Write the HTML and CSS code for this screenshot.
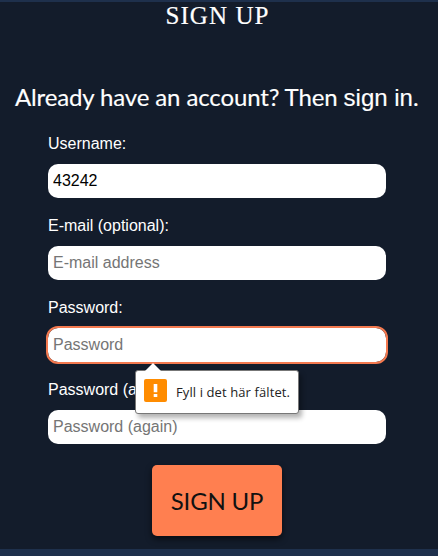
FILE: index.html
```html
<!DOCTYPE html>
<html lang="en">
<head>
<meta charset="utf-8">
<title>Sign up</title>
<link rel="stylesheet" href="styles.css">
</head>
<body>
<main class="panel">
  <h1 class="title">SIGN UP</h1>
  <p class="lead">Already have an account? Then <a class="link">sign in</a>.</p>
  <form class="form" novalidate>
    <div class="field">
      <label for="username">Username:</label>
      <input id="username" type="text" value="43242">
    </div>
    <div class="field">
      <label for="email">E-mail (optional):</label>
      <input id="email" type="email" placeholder="E-mail address">
    </div>
    <div class="field">
      <label for="password">Password:</label>
      <input id="password" class="active" type="password" placeholder="Password">
      <div class="tip">
        <svg class="arrow" width="18" height="9" viewBox="0 0 18 9"><path d="M0 9 9 0l9 9z" fill="#fff"/></svg>
        <svg class="warn" width="23" height="23" viewBox="0 0 23 23"><rect width="23" height="23" rx="2" fill="#ff8c00"/><path d="M9.7 5h3.6v8.3H9.7zM9.7 15h3.6v3H9.7z" fill="#fff"/></svg>
        <span class="tip-text">Fyll i det här fältet.</span>
      </div>
    </div>
    <div class="field">
      <label for="again">Password (again):</label>
      <input id="again" type="password" placeholder="Password (again)">
    </div>
    <button class="submit" type="button">SIGN UP</button>
  </form>
</main>
</body>
</html>
```
FILE: styles.css
```css
* { box-sizing: border-box; }
body {
  margin: 0;
  height: 556px;
  overflow: hidden;
  background: #1e304c;
  color: #fff;
  font-family: "Liberation Sans", Arial, sans-serif;
  font-size: 16px;
}
.panel {
  height: 549px;
  border-top: 2px solid #1e304c;
  background: #131c2b;
}
.title {
  margin: 0;
  height: 30px;
  padding-right: 3px;
  font: 400 25px/28px "Liberation Serif", serif;
  letter-spacing: 1.1px;
  text-align: center;
  -webkit-text-stroke: .2px #fff;
}
.lead {
  margin: 49px 0 0 15px;
  height: 33px;
  font: 400 24px/32px Lato, sans-serif;
  letter-spacing: -.13px;
  white-space: nowrap;
  -webkit-text-stroke: .15px #fff;
}
.link {
  font-family: "Liberation Sans", Arial, sans-serif;
  letter-spacing: 0;
}
.form {
  display: flex;
  flex-direction: column;
  width: 338px;
  margin: 20px 0 0 48px;
}
.field {
  position: relative;
  display: flex;
  flex-direction: column;
  height: 82px;
}
.field label {
  height: 30px;
  line-height: 19px;
}
.field input {
  width: 338px;
  height: 34px;
  padding: 0 5px;
  border: 0;
  border-radius: 10px;
  background: #fff;
  color: #000;
  font: 16px "Liberation Sans", Arial, sans-serif;
  outline: 0;
}
.field input::placeholder { color: #757575; }
.field input.active { outline: 2px solid #f4794f; }
.tip {
  position: absolute;
  z-index: 1;
  left: 87px;
  top: 72px;
  display: flex;
  align-items: center;
  width: 164px;
  height: 44px;
  padding: 0 0 3px 8px;
  border: 1px solid #777;
  border-radius: 3px;
  background: #fff;
  box-shadow: 3px 4px 5px rgba(0, 0, 0, .3);
}
.arrow {
  position: absolute;
  left: 8px;
  top: -8px;
}
.tip-text {
  margin: 3px 0 0 9px;
  color: #222;
  font: 13px/18px "Open Sans", "Noto Sans", sans-serif;
  letter-spacing: .1px;
  white-space: nowrap;
}
.submit {
  align-self: flex-start;
  width: 130px;
  height: 71px;
  margin: 3px 0 0 104px;
  padding: 0 0 1px;
  border: 0;
  border-radius: 5px;
  background: #ff7f50;
  color: #111;
  font: 400 24px Lato, sans-serif;
  letter-spacing: -.2px;
  box-shadow: 0 3px 6px rgba(0, 0, 0, .6);
}
```
